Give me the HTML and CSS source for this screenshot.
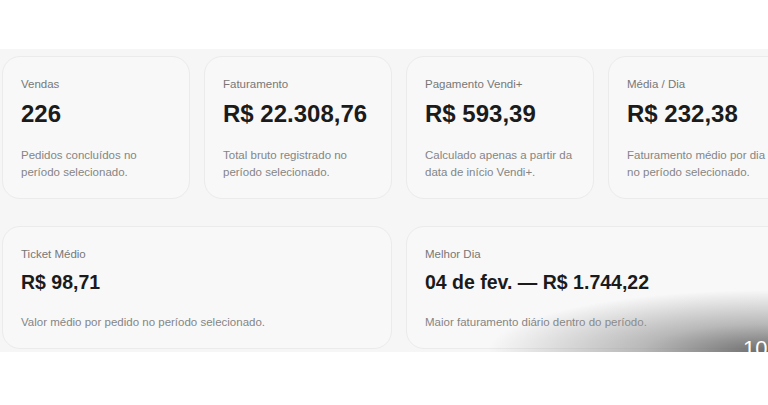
FILE: index.html
```html
<!DOCTYPE html>
<html lang="pt-BR">
<head>
    <meta charset="UTF-8">
    <meta name="viewport" content="width=device-width, initial-scale=1.0">
    <title>Resumo do período</title>
    <link rel="stylesheet" href="styles.css">
</head>
<body>
    <div class="top"></div>
    <div class="panel">
        <div class="grid">
            <div class="card">
                <p class="label">Vendas</p>
                <p class="value">226</p>
                <p class="desc">Pedidos concluídos no<br>período selecionado.</p>
            </div>
            <div class="card">
                <p class="label">Faturamento</p>
                <p class="value">R$ 22.308,76</p>
                <p class="desc">Total bruto registrado no<br>período selecionado.</p>
            </div>
            <div class="card">
                <p class="label">Pagamento Vendi+</p>
                <p class="value">R$ 593,39</p>
                <p class="desc">Calculado apenas a partir da<br>data de início Vendi+.</p>
            </div>
            <div class="card">
                <p class="label">Média / Dia</p>
                <p class="value">R$ 232,38</p>
                <p class="desc">Faturamento médio por dia<br>no período selecionado.</p>
            </div>
            <div class="card wide">
                <p class="label">Ticket Médio</p>
                <p class="value small">R$ 98,71</p>
                <p class="desc">Valor médio por pedido no período selecionado.</p>
            </div>
            <div class="card wide">
                <p class="label">Melhor Dia</p>
                <p class="value small">04 de fev. — R$ 1.744,22</p>
                <p class="desc">Maior faturamento diário dentro do período.</p>
            </div>
        </div>
        <!-- sombra do player por cima -->
        <div class="shade"><span class="time">10</span></div>
    </div>
</body>
</html>
```

FILE: styles.css
```css
body {
    margin: 0;
    background-color: #fff;
    font-family: "Liberation Sans", Arial, sans-serif;
}
.top {
    height: 49px;
}
.panel {
    position: relative;
    height: 303px;
    background-color: #f6f6f6;
    overflow: hidden;
}
.grid {
    display: grid;
    grid-template-columns: repeat(4, 188px);
    column-gap: 14px;
    row-gap: 27px;
    padding: 7px 0 0 2px;
}
.card {
    background-color: #f8f8f8;
    border: 1px solid #ebebeb;
    border-radius: 18px;
    padding: 20px 18px 17px;
}
.card.wide {
    grid-column: span 2;
}
.card p {
    margin: 0;
}
.label {
    font-size: 11.5px;
    line-height: 14px;
    color: #777;
}
.value {
    margin-top: 8px !important;
    font-size: 24px;
    line-height: 30px;
    font-weight: bold;
    color: #1b1b1b;
    white-space: nowrap;
}
.value.small {
    margin-top: 6px !important;
    font-size: 19.5px;
}
.desc {
    margin-top: 18px !important;
    font-size: 11.5px;
    line-height: 17px;
    color: #858585;
    white-space: nowrap;
}
.wide .desc {
    margin-top: 17px !important;
}
.shade {
    position: absolute;
    right: 0;
    bottom: 0;
    width: 280px;
    height: 70px;
    background: radial-gradient(ellipse 280px 62px at 100% 100%, rgba(100,100,100,0.95) 0%, rgba(150,150,150,0.65) 45%, rgba(246,246,246,0) 100%);
}
.time {
    position: absolute;
    left: 255px;
    top: 56px;
    font-size: 22px;
    line-height: 22px;
    color: #fff;
}
```
